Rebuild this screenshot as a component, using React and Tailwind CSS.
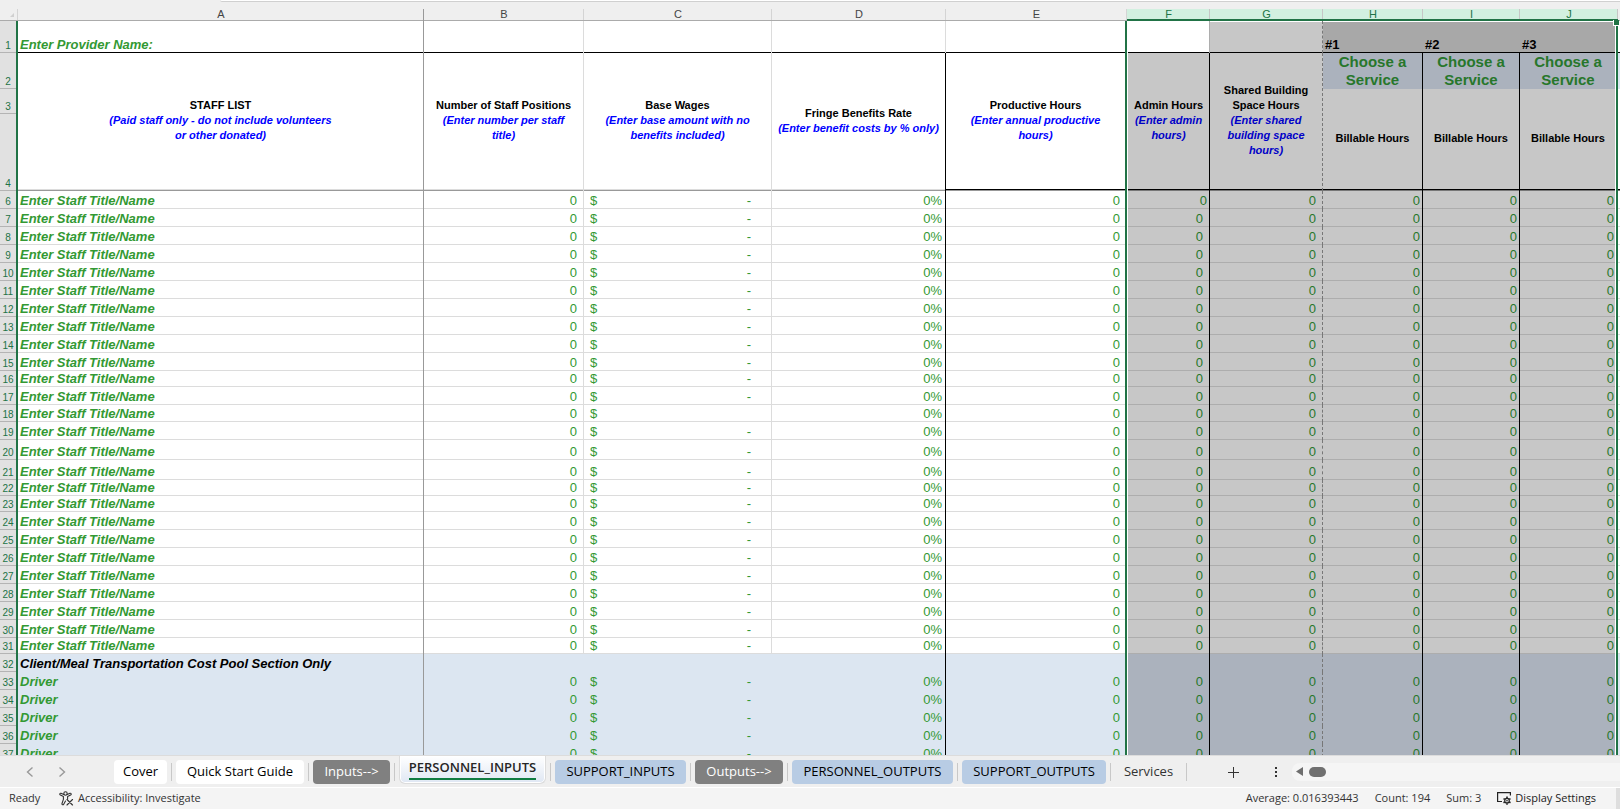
import clsx from "clsx";

const COLUMNS = [
  { id: "A", width: "w-auto" },
  { id: "B", width: "w-[160px]" },
  { id: "C", width: "w-[188px]" },
  { id: "D", width: "w-[174px]" },
  { id: "E", width: "w-[181px]" },
  { id: "F", width: "w-[83px]", selected: true },
  { id: "G", width: "w-[113px]", selected: true },
  { id: "H", width: "w-[100px]", selected: true },
  { id: "I", width: "w-[97px]", selected: true },
  { id: "J", width: "w-[98px]", selected: true },
];

// rows that are not the default 18px tall
const ROW_HEIGHTS = {
  16: "h-[16px]",
  18: "h-[17px]",
  20: "h-[20px]",
  21: "h-[20px]",
  22: "h-[16px]",
  23: "h-[16px]",
  31: "h-[16px]",
};

const ROWS = Array.from({ length: 32 }, (_, i) => {
  const number = i + 6;
  if (number < 32) return { number, title: "Enter Staff Title/Name" };
  if (number === 32) return { number, title: "Client/Meal Transportation Cost Pool Section Only", section: true };
  return { number, title: "Driver" };
});

const TABS = [
  { name: "Cover", width: "w-[53px]", style: "bg-white text-black" },
  { name: "Quick Start Guide", width: "w-[128px]", style: "bg-white text-black" },
  { name: "Inputs-->", width: "w-[77px]", style: "bg-[#808080] text-white" },
  { name: "PERSONNEL_INPUTS", width: "w-[147px]", active: true },
  { name: "SUPPORT_INPUTS", width: "w-[131px]", style: "bg-[#b8cce4] text-black" },
  { name: "Outputs-->", width: "w-[88px]", style: "bg-[#808080] text-white" },
  { name: "PERSONNEL_OUTPUTS", width: "w-[161px]", style: "bg-[#b8cce4] text-black" },
  { name: "SUPPORT_OUTPUTS", width: "w-[144px]", style: "bg-[#b8cce4] text-black" },
  { name: "Services", width: "w-[67px]", style: "text-[#333]" },
];

const RowNumber = ({ children }) => (
  <th
    scope="row"
    className="border-r-2 border-[#217346] bg-[#e1e1e1] p-0 pb-px text-center align-bottom text-[10px] font-normal leading-[13px] text-[#217346] shadow-[inset_0_-1px_0_#b4b4b4]"
  >
    {children}
  </th>
);

const HeaderCell = ({ title, hint, className, hintColor = "text-[#0000ff]", rowSpan = 3 }) => (
  <td rowSpan={rowSpan} className={clsx("p-0 pb-[3px] text-center align-middle text-[11px] font-bold leading-[15px] text-black", className)}>
    <div>{title}</div>
    {hint && <div className={clsx("whitespace-pre-line italic", hintColor)}>{hint}</div>}
  </td>
);

const ServiceCell = ({ className }) => (
  <td className={clsx("bg-[#abb2bd] p-0 text-center align-middle text-[15px] font-bold leading-[18px] text-[#27772b]", className)}>
    Choose a<br />Service
  </td>
);

// horizontal gridlines are inset shadows so that the column borders run through unbroken
const StaffRow = ({ row }) => {
  const blue = row.number >= 32;
  const plain = blue ? "bg-[#dce6f1]" : "bg-white shadow-[inset_0_-1px_0_#dcdcdc]";
  const selected = blue ? "bg-[#abb2bd]" : "bg-[#c7c7c7] shadow-[inset_0_-1px_0_#adadad]";
  const last = blue ? "bg-[#abb2bd] shadow-[inset_-1px_0_0_#fff]" : "bg-[#c7c7c7] shadow-[inset_-1px_0_0_#fff,inset_0_-1px_0_#adadad]";
  const gridline = blue ? "border-[#dce6f1]" : "border-[#dcdcdc]";
  const zero = row.section ? "" : "0";
  const cell = "p-0 pb-px";

  return (
    <tr className={clsx("align-bottom text-[13px] leading-[15px] text-[#339933]", ROW_HEIGHTS[row.number] || "h-[18px]")}>
      <RowNumber>{row.number}</RowNumber>
      <td className={clsx(cell, "whitespace-nowrap border-r border-[#999] pl-[2px] font-bold italic", plain, row.section && "text-black")}>
        {row.title}
      </td>
      <td className={clsx(cell, "border-r pr-[6px] text-right", plain, gridline)}>{zero}</td>
      <td className={clsx(cell, "border-r pl-[6px] pr-[20px]", plain, gridline)}>
        {!row.section && (
          <div className="flex justify-between">
            <span>$</span>
            {row.number !== 18 && <span>-</span>}
          </div>
        )}
      </td>
      <td className={clsx(cell, "border-r border-black pr-[3px] text-right", plain)}>{row.section ? "" : "0%"}</td>
      <td className={clsx(cell, "border-r-2 border-[#217346] pr-[5px] text-right", plain)}>{zero}</td>
      <td
        className={clsx(
          cell,
          "border-l border-r border-l-white border-r-black text-right text-[#27772b]",
          row.number === 6 ? "pr-[2px]" : "pr-[6px]",
          selected
        )}
      >
        {zero}
      </td>
      <td className={clsx(cell, "border-r border-dashed border-[#777] pr-[6px] text-right text-[#27772b]", selected)}>{zero}</td>
      <td className={clsx(cell, "border-r border-black pr-[2px] text-right text-[#27772b]", selected)}>{zero}</td>
      <td className={clsx(cell, "border-r border-black pr-[2px] text-right text-[#27772b]", selected)}>{zero}</td>
      <td className={clsx(cell, "border-r-2 border-[#217346] pr-[2px] text-right text-[#27772b]", last)}>{zero}</td>
      <td className={clsx("p-0", plain)} />
    </tr>
  );
};

const Sheet = () => (
  <table className="w-full table-fixed border-separate border-spacing-0 font-['Liberation_Sans',Arial,sans-serif]">
    <colgroup>
      <col className="w-[18px]" />
      {COLUMNS.map((column) => (
        <col key={column.id} className={column.width} />
      ))}
      <col className="w-[2px]" />
    </colgroup>
    <thead>
      <tr className="h-[12px] text-[11px] leading-[10px]">
        <td className="p-0 shadow-[inset_0_-1px_0_#ababab,inset_-1px_0_0_#d4d4d4]">
          <svg viewBox="0 0 4 4" className="ml-auto mr-[4px] size-1" fill="#d0d0d0" aria-hidden="true">
            <path d="M4 0v4H0z" />
          </svg>
        </td>
        {COLUMNS.map((column) => (
          <th
            key={column.id}
            scope="col"
            className={clsx(
              "p-0 pb-[2px] font-normal",
              column.selected && "bg-[#d2f0e0] text-[#217346] shadow-[inset_0_-2px_0_#217346,inset_-1px_0_0_#c6c6c6]",
              column.id === "A" && "text-[#444] shadow-[inset_-1px_0_0_#999,inset_0_-1px_0_#ababab]",
              !column.selected && column.id !== "A" && "text-[#444] shadow-[inset_0_-1px_0_#ababab,inset_-1px_0_0_#d4d4d4]"
            )}
          >
            {column.id}
          </th>
        ))}
        <td className="p-0 shadow-[inset_0_-1px_0_#ababab]" />
      </tr>
    </thead>
    <tbody>
      <tr className="h-[32px] align-bottom text-[13px] font-bold leading-[15px] text-black">
        <RowNumber>1</RowNumber>
        <td className="border-r border-[#999] bg-white p-0 pb-px pl-[2px] italic text-[#339933] shadow-[inset_0_-1px_0_#000]">Enter Provider Name:</td>
        <td className="border-r border-[#dcdcdc] bg-white p-0 shadow-[inset_0_-1px_0_#000]" />
        <td className="border-r border-[#dcdcdc] bg-white p-0 shadow-[inset_0_-1px_0_#000]" />
        <td className="border-r border-[#dcdcdc] bg-white p-0 shadow-[inset_0_-1px_0_#000]" />
        <td className="border-r-2 border-[#217346] bg-white p-0 shadow-[inset_0_-1px_0_#000]" />
        <td className="border-l border-r border-l-white border-r-[#adadad] bg-white p-0 shadow-[inset_0_-1px_0_#000]" />
        <td className="border-r border-dashed border-[#777] bg-[#c7c7c7] p-0 shadow-[inset_0_1px_0_#fff,inset_0_-1px_0_#000]" />
        <td className="bg-[#a8a8a8] p-0 pb-px pl-[2px] shadow-[inset_0_1px_0_#fff,inset_0_-1px_0_#000]">#1</td>
        <td className="bg-[#a8a8a8] p-0 pb-px pl-[2px] shadow-[inset_0_1px_0_#fff,inset_0_-1px_0_#000]">#2</td>
        <td className="relative border-r-2 border-[#217346] bg-[#a8a8a8] p-0 pb-px pl-[2px] shadow-[inset_-1px_0_0_#fff,inset_0_1px_0_#fff,inset_0_-1px_0_#000]">
          #3
          <span className="absolute -right-[3px] -top-px size-[6px] border-b border-l border-white bg-[#217346]" />
        </td>
        <td className="bg-white p-0 shadow-[inset_0_-1px_0_#000]" />
      </tr>
      <tr className="h-[36px]">
        <RowNumber>2</RowNumber>
        <HeaderCell
          title="STAFF LIST"
          hint={"(Paid staff only - do not include volunteers\nor other donated)"}
          className="border-r border-[#999] bg-white shadow-[inset_0_-1px_0_#999,inset_0_-2px_0_#dcdcdc]"
        />
        <HeaderCell
          title="Number of Staff Positions"
          hint={"(Enter number per staff\ntitle)"}
          className="border-r border-[#dcdcdc] bg-white shadow-[inset_0_-1px_0_#999,inset_0_-2px_0_#dcdcdc]"
        />
        <HeaderCell
          title="Base Wages"
          hint={"(Enter base amount with no\nbenefits included)"}
          className="border-r border-[#dcdcdc] bg-white shadow-[inset_0_-1px_0_#999,inset_0_-2px_0_#dcdcdc]"
        />
        <HeaderCell
          title="Fringe Benefits Rate"
          hint="(Enter benefit costs by % only)"
          className="border-r border-black bg-white shadow-[inset_0_-1px_0_#999,inset_0_-2px_0_#dcdcdc]"
        />
        <HeaderCell
          title="Productive Hours"
          hint={"(Enter annual productive\nhours)"}
          className="border-r-2 border-[#217346] bg-white shadow-[inset_0_-1px_0_#999,inset_0_-2px_0_#000]"
        />
        <HeaderCell
          title="Admin Hours"
          hint={"(Enter admin\nhours)"}
          hintColor="text-[#0000c7]"
          className="border-l border-r border-l-white border-r-black bg-[#c7c7c7] shadow-[inset_0_-1px_0_#777,inset_0_-2px_0_#000]"
        />
        <HeaderCell
          title={<>Shared Building<br />Space Hours</>}
          hint={"(Enter shared\nbuilding space\nhours)"}
          hintColor="text-[#0000c7]"
          className="border-r border-dashed border-[#777] bg-[#c7c7c7] shadow-[inset_0_-1px_0_#777,inset_0_-2px_0_#000]"
        />
        <ServiceCell className="border-r border-black" />
        <ServiceCell className="border-r border-black" />
        <ServiceCell className="border-r-2 border-[#217346] shadow-[inset_-1px_0_0_#fff]" />
        <td className="bg-[#dce6f1] p-0" />
      </tr>
      <tr className="h-[25px]">
        <RowNumber>3</RowNumber>
        <HeaderCell rowSpan={2} title="Billable Hours" className="border-r border-black bg-[#c7c7c7] shadow-[inset_0_-1px_0_#777,inset_0_-2px_0_#000]" />
        <HeaderCell rowSpan={2} title="Billable Hours" className="border-r border-black bg-[#c7c7c7] shadow-[inset_0_-1px_0_#777,inset_0_-2px_0_#000]" />
        <HeaderCell
          rowSpan={2}
          title="Billable Hours"
          className="border-r-2 border-[#217346] bg-[#c7c7c7] shadow-[inset_-1px_0_0_#fff,inset_0_-1px_0_#777,inset_0_-2px_0_#000]"
        />
        <td rowSpan={2} className="bg-white p-0 shadow-[inset_0_-1px_0_#777,inset_0_-2px_0_#000]" />
      </tr>
      <tr className="h-[77px]">
        <RowNumber>4</RowNumber>
      </tr>
      {ROWS.map((row) => (
        <StaffRow key={row.number} row={row} />
      ))}
    </tbody>
  </table>
);

const SheetTabs = () => (
  <nav aria-label="Sheets" className="flex h-8 shrink-0 items-center border-t border-[#dcdcdc] bg-[#efefef] text-[13px]">
    <div className="flex w-[114px] shrink-0 gap-[20px] pl-[24px]">
      <button type="button" aria-label="Previous sheet" className="text-[#999]">
        <svg viewBox="0 0 12 12" className="size-3" fill="none" stroke="currentColor" strokeWidth="1.4"><path d="M8.500 1.500L3.500 6l5 4.500" /></svg>
      </button>
      <button type="button" aria-label="Next sheet" className="text-[#999]">
        <svg viewBox="0 0 12 12" className="size-3" fill="none" stroke="currentColor" strokeWidth="1.4"><path d="M3.500 1.500l5 4.500-5 4.500" /></svg>
      </button>
    </div>
    {TABS.map((tab) => (
      <div key={tab.name} className="flex h-full shrink-0 items-center">
        {tab.active ? (
          <button
            type="button"
            aria-current="page"
            className={clsx(
              "flex h-7 items-start justify-center self-start rounded-b-md border border-t-0 border-[#dcdcdc] bg-linear-to-b from-white to-[#dfe7f3] shadow-[inset_0_0_0_1px_#fff]",
              tab.width
            )}
          >
            <span className="border-b-2 border-[#107c41] font-semibold leading-[22px] text-[#262626]">{tab.name}</span>
          </button>
        ) : (
          <button type="button" className={clsx("h-6 whitespace-nowrap rounded-[4px] text-center", tab.width, tab.style)}>{tab.name}</button>
        )}
        <span className="mx-1 h-[18px] w-px bg-[#c8c8c8]" />
      </div>
    ))}
    <button type="button" aria-label="New sheet" className="ml-[36px] text-[#333]">
      <svg viewBox="0 0 12 12" className="size-3" fill="none" stroke="currentColor"><path d="M6.500 1v11M1 6.500h11" /></svg>
    </button>
    <span className="ml-[36px] flex flex-col gap-[2px]">
      <i className="size-[2px] bg-[#333]" />
      <i className="size-[2px] bg-[#333]" />
      <i className="size-[2px] bg-[#333]" />
    </span>
    <div className="ml-[15px] flex h-[18px] grow items-center gap-[6px] rounded-l-lg bg-[#f5f5f5] pl-[4px]">
      <svg viewBox="0 0 7 9" className="h-[9px] w-[7px]" fill="#6e6e6e" aria-hidden="true"><path d="M7 0v9L0 4.500z" /></svg>
      <span className="h-[10px] w-[17px] rounded-full bg-[#707070]" />
    </div>
  </nav>
);

const StatusBar = () => (
  <footer className="flex h-[22px] shrink-0 items-center border-t border-white bg-[#f4f4f4] pl-[9px] text-[11px] text-[#333]">
    <span className="w-[50px]">Ready</span>
    <button type="button" className="flex items-center gap-[4px]">
      <svg viewBox="0 0 15 15" className="size-[15px]" fill="none" stroke="currentColor" strokeWidth="1.1" strokeLinecap="round" strokeLinejoin="round" aria-hidden="true">
        <circle cx="6.500" cy="2.500" r="1.700" />
        <path d="M4.800 3.500L2 2.300C.8 2 .3 3.400 1.400 4l3 1.400v3L3 12.500c-.3 1.300 1.200 1.700 1.700.7L6.500 10M8.200 3.500L11 2.300c1.200-.3 1.700 1.100.6 1.700l-3 1.400v2.400M8 8.500l5.500 5.500M13.500 8.500L8 14" />
      </svg>
      Accessibility: Investigate
    </button>
    <div className="ml-auto flex items-center gap-[16px] self-stretch">
      <span>Average: 0.016393443</span>
      <span>Count: 194</span>
      <span>Sum: 3</span>
      <button type="button" className="flex items-center gap-[3px] text-[#222]">
        <svg viewBox="0 0 15 13" className="h-[13px] w-[15px]" fill="none" stroke="currentColor" strokeWidth="1.2" aria-hidden="true">
          <path d="M4.500 9.500H.6V.6h12.800v3M3 9.500h2" />
          <path d="M10 4.600v1.500M10 11.200v1.500M6.500 6.600l1.300.8M12.200 9.900l1.300.8M6.500 10.700l1.300-.8M12.200 7.400l1.300-.8" strokeWidth="1.600" />
          <circle cx="10" cy="8.650" r="2.300" />
          <circle cx="10" cy="8.650" r=".6" fill="currentColor" strokeWidth=".4" />
        </svg>
        Display Settings
      </button>
      <span className="ml-[4px] w-[4px] self-stretch bg-[#dedede]" />
    </div>
  </footer>
);

const App = () => (
  <div className="flex h-screen flex-col overflow-hidden bg-[#efefef] font-['Open_Sans','Noto_Sans',sans-serif]">
    <div className="h-[9px] shrink-0">
      <div className="ml-[220px] h-[2px] rounded-bl border-b border-[#d0d0d0] bg-white" />
    </div>
    <main className="min-h-0 grow overflow-hidden">
      <Sheet />
    </main>
    <SheetTabs />
    <StatusBar />
  </div>
);

export default App;
